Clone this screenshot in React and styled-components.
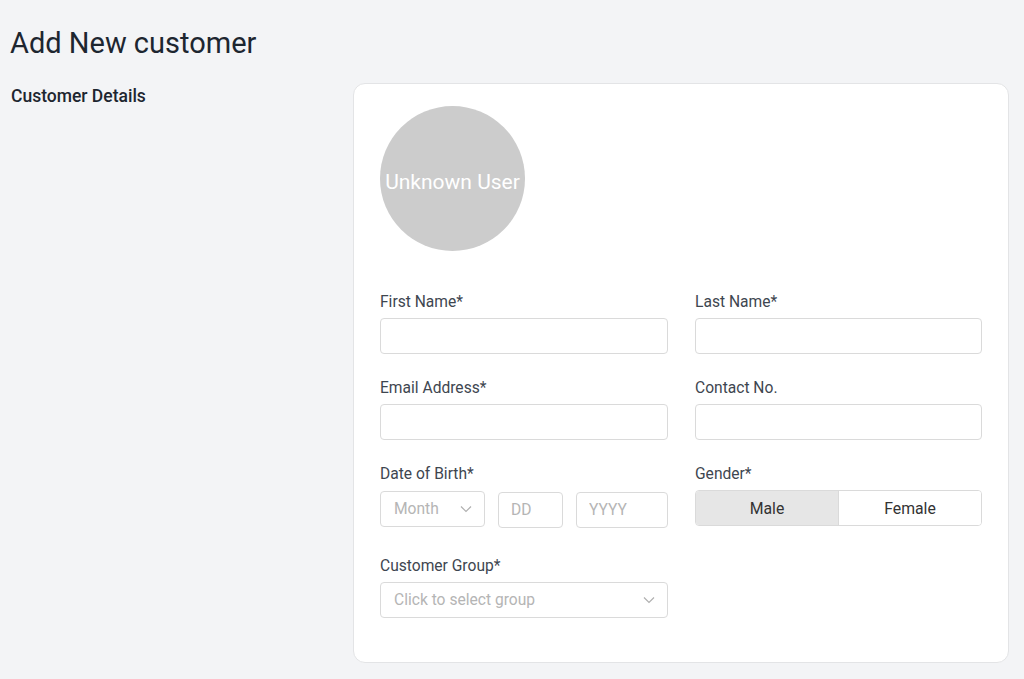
import React from "react";
import styled, { createGlobalStyle } from "styled-components";

const Global = createGlobalStyle`
  body {
    margin: 0;
    background: #f3f4f6;
    font-family: Roboto, "Liberation Sans", sans-serif;
  }
`;

const Page = styled.div`
  padding: 0 10px;
  min-height: 679px;
  box-sizing: border-box;
`;

const Title = styled.h1`
  margin: 0;
  padding-top: 25px;
  font-size: 29px;
  font-weight: 400;
  line-height: 37px;
  color: #1d2630;
`;

const Body = styled.div`
  display: flex;
  margin-top: 21px;
`;

const Side = styled.div`
  width: 343px;
  flex-shrink: 0;
`;

const SideTitle = styled.h2`
  margin: 0;
  padding-left: 1px;
  padding-top: 3px;
  font-size: 17.5px;
  font-weight: 500;
  line-height: 21px;
  color: #1d2630;
`;

const Card = styled.div`
  width: 656px;
  box-sizing: border-box;
  background: #fff;
  border: 1px solid #e3e4e6;
  border-radius: 12px;
  padding: 22px 26px 44px 26px;
`;

const Avatar = styled.div`
  width: 145px;
  height: 145px;
  border-radius: 50%;
  background: #cccccc;
  color: #fff;
  display: flex;
  align-items: center;
  justify-content: center;
  padding-top: 6px;
  box-sizing: border-box;
  font-size: 21px;
  white-space: nowrap;
`;

const Grid = styled.div`
  display: grid;
  grid-template-columns: 288px 287px;
  column-gap: 27px;
  row-gap: 24px;
  margin-top: 41px;
`;

const Field = styled.div`
  display: flex;
  flex-direction: column;
`;

const Label = styled.label`
  font-size: 15.6px;
  line-height: 18px;
  padding-top: 1px;
  color: #3e4650;
  margin-bottom: 7px;
`;

const Input = styled.input`
  box-sizing: border-box;
  height: 36px;
  width: ${(p) => p.$w || "100%"};
  margin-top: ${(p) => p.$mt || "0"};
  border: 1px solid #dadada;
  border-radius: 4px;
  padding: 0 12px;
  font-family: inherit;
  font-size: 15.6px;
  color: #333;
  background: #fff;
  outline: none;
  &::placeholder {
    color: #b5b5b5;
  }
`;

const Select = styled.div`
  box-sizing: border-box;
  height: 36px;
  width: ${(p) => p.$w || "100%"};
  margin-top: ${(p) => p.$mt || "0"};
  border: 1px solid #dadada;
  border-radius: 4px;
  padding: 0 12px 0 13px;
  display: flex;
  align-items: center;
  justify-content: space-between;
  font-size: 15.6px;
  color: #b5b5b5;
  background: #fff;
`;

const DateRow = styled.div`
  display: flex;
  align-items: flex-start;
  gap: 13px;
  padding-bottom: 4px;
`;

const Toggle = styled.div`
  display: flex;
  height: 36px;
  box-sizing: border-box;
  border: 1px solid #dadada;
  border-radius: 4px;
  overflow: hidden;
`;

const ToggleBtn = styled.div`
  flex: 1;
  display: flex;
  align-items: center;
  justify-content: center;
  font-size: 15.8px;
  color: #333;
  background: ${(p) => (p.$active ? "#e6e6e6" : "#fff")};
  & + & {
    border-left: 1px solid #dadada;
  }
`;

const Chevron = () => (
  <svg width="12" height="8" viewBox="0 0 12 8" fill="none">
    <path d="M1 1.5 L6 6.5 L11 1.5" stroke="#b0b0b0" strokeWidth="1.2" />
  </svg>
);

export default function App() {
  return (
    <Page>
      <Global />
      <Title>Add New customer</Title>
      <Body>
        <Side>
          <SideTitle>Customer Details</SideTitle>
        </Side>
        <Card>
          <Avatar>Unknown User</Avatar>
          <Grid>
            <Field>
              <Label>First Name*</Label>
              <Input />
            </Field>
            <Field>
              <Label>Last Name*</Label>
              <Input />
            </Field>
            <Field>
              <Label>Email Address*</Label>
              <Input />
            </Field>
            <Field>
              <Label>Contact No.</Label>
              <Input />
            </Field>
            <Field>
              <Label>Date of Birth*</Label>
              <DateRow>
                <Select $w="105px" $mt="1px">
                  Month <Chevron />
                </Select>
                <Input $w="65px" $mt="2px" placeholder="DD" />
                <Input $w="92px" $mt="2px" placeholder="YYYY" />
              </DateRow>
            </Field>
            <Field>
              <Label>Gender*</Label>
              <Toggle>
                <ToggleBtn $active>Male</ToggleBtn>
                <ToggleBtn>Female</ToggleBtn>
              </Toggle>
            </Field>
            <Field>
              <Label>Customer Group*</Label>
              <Select>
                Click to select group <Chevron />
              </Select>
            </Field>
          </Grid>
        </Card>
      </Body>
    </Page>
  );
}
